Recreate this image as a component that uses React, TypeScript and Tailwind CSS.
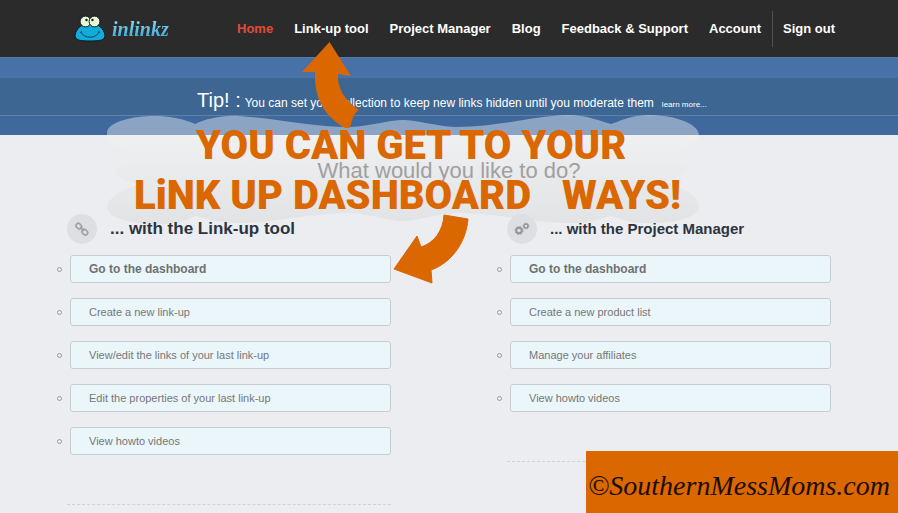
import { clsx } from "clsx";

interface NavItem {
  label: string;
  active?: boolean;
}

interface TaskListProps {
  title: string;
  titleClass: string;
  icon: React.ReactNode;
  items: string[];
}

const navItems: NavItem[] = [
  { label: "Home", active: true },
  { label: "Link-up tool" },
  { label: "Project Manager" },
  { label: "Blog" },
  { label: "Feedback & Support" },
  { label: "Account" },
];

const linkupItems = [
  "Go to the dashboard",
  "Create a new link-up",
  "View/edit the links of your last link-up",
  "Edit the properties of your last link-up",
  "View howto videos",
];

const projectItems = [
  "Go to the dashboard",
  "Create a new product list",
  "Manage your affiliates",
  "View howto videos",
];

function FrogIcon() {
  return (
    <svg width="32" height="28" viewBox="0 0 32 28" aria-hidden="true">
      <path
        d="M16 8C24 8 30 14 31 20C31 25 27 26 16 26C5 26 1 25 1 20C2 14 8 8 16 8Z"
        fill="#12abdb"
        stroke="#0b1a20"
      />
      <circle cx="11.500" cy="6.500" r="5.400" fill="#e9f7d8" stroke="#0b1a20" />
      <circle cx="20.500" cy="6.500" r="5.400" fill="#e9f7d8" stroke="#0b1a20" />
      <circle cx="12.500" cy="5" r="1.200" fill="#15191b" />
      <circle cx="18.500" cy="5" r="1.200" fill="#15191b" />
      <path d="M7 17C10 24 22 24 25 17M6 17.500L8 16.500M24 16.500L26 17.500" fill="none" stroke="#0d4457" />
    </svg>
  );
}

function ChainIcon() {
  return (
    <svg width="14" height="14" viewBox="0 0 14 14" fill="none" stroke="#9da0a5" strokeWidth="1.600" aria-hidden="true">
      <rect x="1" y="2" width="6" height="4.500" rx="2" transform="rotate(45 4 4)" />
      <rect x="7" y="8" width="6" height="4.500" rx="2" transform="rotate(45 10 10)" />
      <path d="M5 5L9 9" />
    </svg>
  );
}

function GearsIcon() {
  return (
    <svg width="16" height="14" viewBox="0 0 16 14" fill="none" stroke="#94979d" aria-hidden="true">
      <circle cx="5" cy="8.500" r="2.800" strokeWidth="2" />
      <circle cx="5" cy="8.500" r="4" strokeWidth="1" strokeDasharray="1.600 1.540" />
      <circle cx="12" cy="4" r="2" strokeWidth="1.600" />
      <circle cx="12" cy="4" r="3" strokeWidth="0.800" strokeDasharray="1.200 1.150" />
    </svg>
  );
}

function Header() {
  return (
    <header className="h-[57px] bg-[#2b2b2b]">
      <div className="mx-auto flex h-full max-w-[772px] items-center justify-between pl-[11px]">
        <a href="#home" className="flex items-center gap-1.5">
          <FrogIcon />
          <span className="bg-linear-to-b from-[#9be2f5] to-[#0d9fd0] bg-clip-text pr-1 font-['Liberation_Serif',serif] text-xl font-bold text-transparent italic">
            inlinkz
          </span>
        </a>
        <nav className="flex items-center gap-[21px] text-[13px] font-bold whitespace-nowrap">
          {navItems.map((item) => (
            <a key={item.label} href="#nav" className={clsx(item.active ? "text-[#e04b3a]" : "text-white")}>
              {item.label}
            </a>
          ))}
          <a href="#signout" className="-ml-[10px] flex h-9 items-center border-l border-[#505050] pl-[10px] text-white">
            Sign out
          </a>
        </nav>
      </div>
    </header>
  );
}

function TipBar() {
  return (
    <div className="bg-[#3f689c]">
      <div className="h-[21px] border-t border-[#5379a8] bg-[#4771a7]" />
      <div className="h-[38px] border-b border-[#5c82ad] bg-[#3d6692]">
        <p className="mx-auto flex max-w-[504px] items-baseline pt-2 whitespace-nowrap text-white">
          <strong className="mr-1 text-xl font-normal">Tip! :</strong>
          <span className="mr-2 text-xs">
            You can set your collection to keep new links hidden until you moderate them
          </span>
          <a href="#more" className="text-[8px]">
            learn more...
          </a>
        </p>
      </div>
      <div className="h-[19px]" />
    </div>
  );
}

function TaskList({ title, titleClass, icon, items }: TaskListProps) {
  return (
    <section>
      <div className="flex items-center gap-[13px]">
        <span className="flex size-[30px] items-center justify-center rounded-full bg-[#dddfe2]">{icon}</span>
        <h2 className={clsx("font-bold text-[#2c3440]", titleClass)}>{title}</h2>
      </div>
      <ul className="mt-[11px] flex flex-col gap-[15px] pl-[2px]">
        {items.map((item, i) => (
          <li key={item} className="-ml-3 flex items-center gap-2">
            <span className="size-[5px] rounded-full border border-[#999ca1]" />
            <a
              href="#task"
              className={clsx(
                "flex h-[28px] flex-1 items-center rounded-[3px] border border-[#c9cdd0] bg-[#eaf6fa] px-[18px]",
                i === 0 ? "text-xs font-bold text-[#707070]" : "text-[11px] text-[#777]"
              )}
            >
              {item}
            </a>
          </li>
        ))}
      </ul>
      <div className="mt-[49px] border-t border-dashed border-[#cfd1d4]" />
    </section>
  );
}

function Cloud() {
  return (
    <svg
      className="absolute top-[115px] left-[107px]"
      width="592"
      height="110"
      viewBox="0 0 592 110"
      aria-hidden="true"
    >
      <defs>
        <linearGradient id="haze" x1="0" y1="0" x2="0" y2="1">
          <stop offset="0" stopColor="#f2f2f2" stopOpacity="0.6" />
          <stop offset="1" stopColor="#dadcdc" stopOpacity="0.6" />
        </linearGradient>
      </defs>
      <path
        d="M0 20V17C2 5 32 0 52 1C70 2 82 6 88 9C99 4 115 0 132 1C165 3 205 12 243 12C265 11 281 5 296 5C311 5 327 11 349 12C392 12 425 1 460 0C481 0 492 6 504 9C512 7 519 1 541 0C571 0 592 10 592 20Z"
        fill="#fff"
        fillOpacity="0.4"
      />
      <path
        d="M0 20H592C591 31 571 39 548 43C570 47 583 50 580 56C577 60 566 64 559 67C580 73 592 84 592 91C592 104 561 109 541 108C519 108 512 103 504 101C492 104 481 109 460 108C425 108 392 98 349 98C327 99 311 106 296 106C281 106 265 99 243 98C205 98 165 108 132 108C115 108 99 104 88 101C82 104 72 109 52 109C20 109 0 102 0 92C1 83 12 76 33 69C19 66 11 63 9 58C7 51 22 48 39 44C20 40 0 32 0 20Z"
        fill="url(#haze)"
      />
    </svg>
  );
}

// Hand-drawn notes and arrows that sit over the dashboard
function Annotations() {
  return (
    <div className="pointer-events-none absolute inset-x-0 top-0 flex justify-center">
      <div className="relative h-[300px] w-[898px] shrink-0 font-['Roboto','Liberation_Sans',sans-serif] text-[40px] leading-[44px] font-black whitespace-nowrap text-[#db6700]">
        <svg className="absolute inset-0" width="898" height="300" viewBox="0 0 898 300" fill="#db6700" aria-hidden="true">
          <path d="M329.500 42L351 76L338 74C337 89 345 100 359 110C354 113 352 119 350 128H345C324 116 314 98 315 72L302 72Z" />
          <path d="M444 215L468 219C466 243 451 263 431 270L432 283L394 269L417 236L421 247C434 243 443 231 444 215Z" stroke="#db6700" strokeLinejoin="round" />
        </svg>
        <p className="absolute top-[124px] left-[196px]">YOU CAN GET TO YOUR</p>
        <p className="absolute top-[174px] left-[134px]">LiNK UP DASHBOARD</p>
        <p className="absolute top-[174px] left-[562px]">WAYS!</p>
      </div>
    </div>
  );
}

export default function App() {
  return (
    <div className="relative min-h-screen overflow-hidden bg-[#ecedf0] font-['Liberation_Sans',Arial,sans-serif]">
      <Header />
      <TipBar />
      <div className="pointer-events-none absolute inset-x-0 top-0 flex justify-center">
        <div className="relative h-[230px] w-[898px] shrink-0">
          <Cloud />
        </div>
      </div>
      <main className="relative mx-auto max-w-[764px]">
        <h1 className="pt-5 text-center text-[22px] leading-8 text-[#a0a0a0]">What would you like to do?</h1>
        <div className="mt-[27px] grid grid-cols-2 gap-x-[116px]">
          <TaskList
            title="... with the Link-up tool"
            titleClass="text-[17px]"
            icon={<ChainIcon />}
            items={linkupItems}
          />
          <TaskList
            title="... with the Project Manager"
            titleClass="text-[15px]"
            icon={<GearsIcon />}
            items={projectItems}
          />
        </div>
      </main>
      <Annotations />
      <footer className="absolute right-0 bottom-0 flex h-[62px] w-[312px] items-center bg-[#db6700] pt-2 pl-[2px] font-['Liberation_Serif',serif] text-[28px] text-[#1c0d00] italic">
        ©SouthernMessMoms.com
      </footer>
    </div>
  );
}
